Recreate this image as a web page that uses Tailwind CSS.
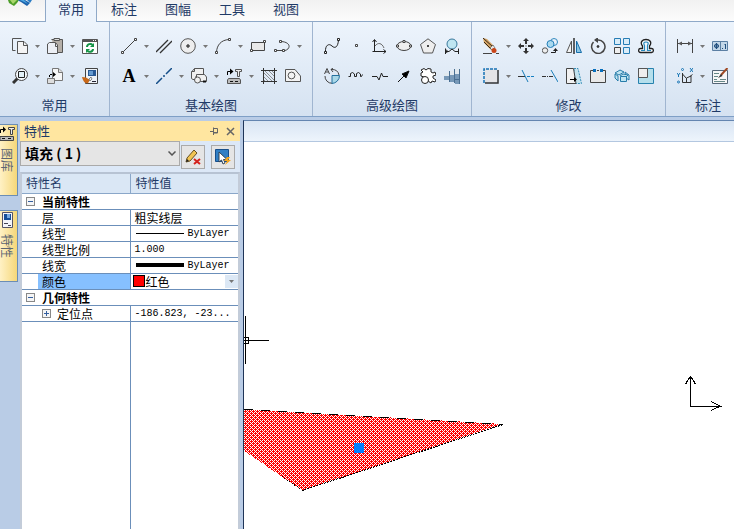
<!DOCTYPE html>
<html lang="zh-CN">
<head>
<meta charset="utf-8">
<title>特性</title>
<script src="https://cdn.jsdelivr.net/npm/@tailwindcss/browser@4"></script>
</head>
<body class="flex h-screen flex-col overflow-hidden bg-[#b9cce6] font-['Noto_Sans_CJK_SC',sans-serif] text-[13px] text-[#1f3a66]">
<svg class="hidden" aria-hidden="true">
  <symbol id="dd" viewBox="0 0 5 3"><path d="M0 0H5L2.5 3Z" fill="#777"/></symbol>
</svg>

<!-- Ribbon tabs -->
<header class="flex h-[22px] shrink-0 border-b border-[#8fa9c8] bg-gradient-to-b from-[#f1f1f1] to-[#fcfcfc]">
  <div class="w-[45px] shrink-0">
    <svg class="ml-2 h-[6px] w-6" viewBox="0 0 24 6" aria-hidden="true"><path d="M0 0H11L9 3 6 6 1 3Z" fill="#4d9e28"/><path d="M2 0H9L5 4Z" fill="#a9d66c"/><path d="M10 0H17L22 3 19 6 13 2 11 1Z" fill="#1c62ac"/><path d="M12 0H16L20 4Z" fill="#4aa6e0"/><path d="M19 0H24L22 3Z" fill="#2b7cc4"/></svg>
  </div>
  <nav class="flex [&_a]:flex [&_a]:justify-center [&_a]:leading-[18px]">
    <a href="#" class="relative h-[22px] w-[52px] border-x border-[#8fa9c8] bg-[#edf4fc]">常用</a>
    <a href="#" class="w-[54px]">标注</a><a href="#" class="w-[54px]">图幅</a><a href="#" class="w-[54px]">工具</a><a href="#" class="w-[54px]">视图</a>
  </nav>
</header>

<!-- Ribbon groups -->
<div role="toolbar" class="flex h-[95px] shrink-0 overflow-hidden border-b border-[#7f9fc6] bg-gradient-to-b from-[#edf4fc] to-[#d5e2f1] pt-[9px] [&_button]:grid [&_button]:h-[30px] [&_button]:shrink-0 [&_button]:place-items-center [&_h2]:text-center [&_h2]:leading-7 [&_section]:-mt-[9px] [&_section]:shrink-0 [&_section]:border-r [&_section]:border-[#a0b5d0] [&_section]:px-[7px] [&_section]:pt-[9px]">
  <section>
    <div class="flex pl-px">
      <button class="w-6" aria-label="复制"><svg class="size-4" viewBox="0 0 16 16" fill="none" stroke="#555"><path d="M3.500 12.500H.5V.5H9.500"/><path d="M5.500 3.500H12L15.500 7V15.500H5.500Z" fill="#f4f4f4"/><path d="M11.500 3.500V7.500H15.500"/></svg></button>
      <button class="w-[11px]" aria-label="复制选项"><svg class="h-[3px] w-[5px]"><use href="#dd"/></svg></button>
      <button class="w-6" aria-label="粘贴"><svg class="size-4" viewBox="0 0 16 16" stroke="#555"><path d="M4.500 1.500H15.500V14.500H10" fill="#b5afa8"/><path d="M7 .5H12.500V2.500H7Z" fill="#ddd"/><path d="M.5 6L2.500 4.500H8.500L10.500 7V15.500H.5Z" fill="#eceff5"/><path d="M8.500 5V8.500H10.500" fill="none"/></svg></button>
      <button class="w-[11px]" aria-label="粘贴选项"><svg class="h-[3px] w-[5px]"><use href="#dd"/></svg></button>
      <button class="w-6" aria-label="刷新"><svg class="size-4" viewBox="0 0 16 16"><path d="M.5 1.500H15.500V15.500H.5Z" fill="#fff" stroke="#555"/><path d="M1 2H15V4H1Z" fill="#555"/><path d="M11 2h1v1h-1zM13 2h1v1h-1z" fill="#fff"/><path d="M5 9C5 6 9 5 10.500 7M11 11C11 14 7 14.500 5.500 13" fill="none" stroke="#159447" stroke-width="2"/><path d="M12 5V9H8ZM4 15V11H8Z" fill="#159447"/></svg></button>
    </div>
    <div class="flex pl-px">
      <button class="w-6" aria-label="显示窗口"><svg class="size-4" viewBox="0 0 16 16" fill="none"><path d="M1 15L5.500 10.500" stroke="#333" stroke-width="3"/><circle cx="9.500" cy="6.500" r="6" fill="#f5f9fd" stroke="#444"/><path d="M6.500 3.500h6v6h-6z" stroke="#222" fill="#e1f0f7"/></svg></button>
      <button class="w-[11px]" aria-label="显示选项"><svg class="h-[3px] w-[5px]"><use href="#dd"/></svg></button>
      <button class="w-6" aria-label="带基点复制"><svg class="size-4" viewBox="0 0 16 16" fill="none" stroke="#777"><path d="M5.500 .5H11.500L15.500 4V12.500H5.500Z" fill="#f6f6f6"/><path d="M11.500 .5V4.500H15.500M.5 10.500H7.500V15.500H.5Z" fill="#ddd"/><path d="M2.500 9V6.500H7" stroke="#000" stroke-dasharray="2 1"/><path d="M6 4L9 6.500 6 9Z" fill="#000" stroke="none"/></svg></button>
      <button class="w-[11px]" aria-label="复制基点选项"><svg class="h-[3px] w-[5px]"><use href="#dd"/></svg></button>
      <button class="w-6" aria-label="特性匹配"><svg class="size-4" viewBox="0 0 16 16"><path d="M3.500 .5H15.500V15.500H3.500Z" fill="#eef2f7" stroke="#444"/><path d="M6 2H14V8H6Z" fill="#285995"/><path d="M7 3H11V7H7Z" fill="#669bd0"/><path d="M10 13.500H14" stroke="#223"/><path d="M0 9L4 9.500 8 12 6 15C3 16 1 13 0 9Z" fill="#c96818"/><path d="M7 11L9 9 10 11 8 13Z" fill="#eee" stroke="#444" stroke-width=".6"/></svg></button>
    </div>
    <h2>常用</h2>
  </section>

  <section>
    <div class="flex">
      <button class="w-6" aria-label="直线"><svg class="size-4" viewBox="0 0 16 16" fill="none" stroke="#444"><path d="M2 14L14 2"/><path d="M.5 13.500h2v2h-2zM13.500 .5h2v2h-2z" fill="#fff"/></svg></button>
      <button class="w-[11px]" aria-label="直线选项"><svg class="h-[3px] w-[5px]"><use href="#dd"/></svg></button>
      <button class="w-6" aria-label="平行线"><svg class="size-4" viewBox="0 0 16 16" stroke="#333" fill="none"><path d="M0 14L12 2M4 15L16 3" stroke-width="1.300"/></svg></button>
      <button class="w-6" aria-label="圆"><svg class="size-4" viewBox="0 0 16 16" fill="none" stroke="#555"><circle cx="8" cy="8" r="7.300" fill="#eee"/><path d="M7 7h2v2H7z" fill="#fff" stroke="#111"/></svg></button>
      <button class="w-[11px]" aria-label="圆选项"><svg class="h-[3px] w-[5px]"><use href="#dd"/></svg></button>
      <button class="w-6" aria-label="圆弧"><svg class="size-4" viewBox="0 0 16 16" fill="none" stroke="#444"><path d="M1.500 14C2 7 6 2 14 1.500"/><path d="M.5 13.500h2v2h-2zM13.500 .5h2v2h-2z" fill="#fff"/></svg></button>
      <button class="w-[11px]" aria-label="圆弧选项"><svg class="h-[3px] w-[5px]"><use href="#dd"/></svg></button>
      <button class="w-6" aria-label="矩形"><svg class="size-4" viewBox="0 0 16 16" fill="none" stroke="#444"><path d="M1.500 4.500H14.500V12.500H1.500Z" fill="#e8e8e8"/><path d="M.5 11.500h2v2h-2zM13.500 2.500h2v2h-2z" fill="#fff"/></svg></button>
      <button class="w-6" aria-label="多段线"><svg class="size-4" viewBox="0 0 16 16" fill="none" stroke="#444"><path d="M3 12.500H11C17 11 17 4 7 3.500"/><path d="M.5 11.500h2v2h-2zM8.500 11.500h2v2h-2zM5.500 2.500h2v2h-2z" fill="#fff"/></svg></button>
      <button class="w-[11px]" aria-label="多段线选项"><svg class="h-[3px] w-[5px]"><use href="#dd"/></svg></button>
    </div>
    <div class="flex">
      <button class="w-6 font-['Liberation_Serif',serif] text-[18px] font-bold leading-none text-black" aria-label="文字">A</button>
      <button class="w-[11px]" aria-label="文字选项"><svg class="h-[3px] w-[5px]"><use href="#dd"/></svg></button>
      <button class="w-6" aria-label="中心线"><svg class="size-4" viewBox="0 0 16 16" fill="none" stroke="#144e88"><path d="M0 16L6 10M10 6L16 0M7 8H9" stroke-width="1.500"/></svg></button>
      <button class="w-[11px]" aria-label="中心线选项"><svg class="h-[3px] w-[5px]"><use href="#dd"/></svg></button>
      <button class="w-6" aria-label="块"><svg class="size-4" viewBox="0 0 16 16" fill="#f0f0f0" stroke="#555"><path d="M.5 10.500V4L3.500 .5H12.500V8H5V11.500H2Z"/><path d="M3.500 .5V3.500H.5" fill="none"/><path d="M5.500 6.500H13.500L15.500 9V13.500H5.500Z"/><circle cx="6.500" cy="12" r="3"/><path d="M12 13.500h3" stroke="#111" stroke-width="2"/></svg></button>
      <button class="w-[11px]" aria-label="块选项"><svg class="h-[3px] w-[5px]"><use href="#dd"/></svg></button>
      <button class="w-6" aria-label="图库"><svg class="size-4" viewBox="0 0 16 16" fill="none" stroke="#555"><path d="M9.500 1.500H15.500V3.500H13.500V8.500H11.500V3.500H9.500Z" fill="#eee"/><path d="M1.500 7V3.500H5" stroke="#000"/><path d="M4 .5L7.500 3.500 4 6.500Z" fill="#000" stroke="none"/><path d="M2.500 10.500H13.500L14.500 12V15.500H1.500V12Z" fill="#bbb"/><path d="M4 13.500h3m2 0h3" stroke="#111"/></svg></button>
      <button class="w-[11px]" aria-label="图库选项"><svg class="h-[3px] w-[5px]"><use href="#dd"/></svg></button>
      <button class="w-6" aria-label="剖面线"><svg class="size-4" viewBox="0 0 16 16" fill="none" stroke="#333"><path d="M2.500 0V16M13.500 0V16M0 2.500H16M0 13.500H16"/><path d="M3 5L11 13M3 9L7 13M4 3L13 12M8 3L13 8M3 12l1 1M11 3l2 2" stroke="#777" stroke-width=".8"/></svg></button>
      <button class="w-6" aria-label="填充"><svg class="size-4" viewBox="0 0 16 16" fill="#f3f3f3" stroke="#555"><path d="M.5 1.500H10L15.500 8V13.500H.5Z"/><circle cx="6.500" cy="7.500" r="3.400"/></svg></button>
    </div>
    <h2>基本绘图</h2>
  </section>

  <section>
    <div class="flex">
      <button class="w-6" aria-label="样条"><svg class="size-4" viewBox="0 0 16 16" fill="none" stroke="#222"><path d="M1.500 14C1 7 5 5 8 8S14 9 14.500 2"/><path d="M.5 13.500h2v2h-2zM13.500 .5h2v2h-2z" fill="#fff"/></svg></button>
      <button class="w-6" aria-label="点"><svg class="size-4" viewBox="0 0 16 16" fill="#fff" stroke="#444"><path d="M7.500 6.500h2v2h-2z"/></svg></button>
      <button class="w-6" aria-label="公式曲线"><svg class="size-4" viewBox="0 0 16 16" fill="none" stroke="#222"><path d="M2.500 2V13.500H14M.5 4L2.500 1.500 4.500 4M11.500 11.500L14 13.500 11.500 15.500M.5 13.500H3"/><path d="M3 8C6 4 10 5 12 10" stroke="#666"/></svg></button>
      <button class="w-6" aria-label="椭圆"><svg class="size-4" viewBox="0 0 16 16" fill="none" stroke="#444"><ellipse cx="8" cy="8" rx="7" ry="4.500" fill="#eee"/><path d="M.5 7h2v2h-2zM13.500 7h2v2h-2zM7 2.500h2v2H7z" fill="#fff"/></svg></button>
      <button class="w-6" aria-label="正多边形"><svg class="size-4" viewBox="0 0 16 16" fill="#eee" stroke="#555"><path d="M8 .8L15.500 6.500 12.500 15H3.500L.5 6.500Z"/><path d="M7.500 7.500h1v1h-1z" stroke="#111"/></svg></button>
      <button class="w-6" aria-label="圆弧拟合"><svg class="size-4" viewBox="0 0 16 16" fill="none" stroke="#222"><circle cx="8" cy="6" r="5" fill="#bfe6f2" stroke="#39789c"/><path d="M1.500 16V10.500M14.500 16V10.500M2 13.500H5M11 13.500H14M5 13.500L8 11 11 13.500M1 11L4 13.500 1 15"/></svg></button>
    </div>
    <div class="flex">
      <button class="w-6" aria-label="局部放大"><svg class="size-4" viewBox="0 0 16 16" fill="none" stroke="#444"><path d="M7 1.500H8A7 7 0 0 1 15 7M1 8A7 7 0 0 0 8 15.300"/><path d="M8 7.500H15.500A8 8 0 0 1 8 15.500Z" fill="#a9d8e8" stroke="#24719e"/><path d="M.5 6L3 .5 5.500 6M1.500 4H4.500M9 0L7 1.500 9 4"/></svg></button>
      <button class="w-6" aria-label="波浪线"><svg class="size-4" viewBox="0 0 16 16" fill="none" stroke="#222"><path d="M.5 8.500H2.500V5.500L4.500 4.500 6.500 6V8.500H8.500V5.500L10.500 4.500 12.500 6V8.500H13.500L14.500 6.500"/></svg></button>
      <button class="w-6" aria-label="双折线"><svg class="size-4" viewBox="0 0 16 16" fill="none" stroke="#222"><path d="M0 8.500H5L7 12 9.500 5 11 8.500H16"/></svg></button>
      <button class="w-6" aria-label="箭头"><svg class="size-4" viewBox="0 0 16 16" stroke="#111"><path d="M2 14L8 8"/><path d="M6 6L13 3 10 10Z"/></svg></button>
      <button class="w-6" aria-label="齿轮"><svg class="size-4" viewBox="0 0 16 16" fill="#fff" stroke="#222"><path d="M4 9L1 8V5L3 4 1 2 4 .5 6 2 8 .5 11 1V4L13 5 15 4 16 7 13 8V10L16 12 15 14 12 13 11 15 8 13"/><circle cx="5" cy="12" r="3.500"/></svg></button>
      <button class="w-6" aria-label="孔轴"><svg class="size-4" viewBox="0 0 16 16"><path d="M0 5H6V3H11V1H16V16H11V14H6V12H0Z" fill="#7899b8"/><path d="M0 5H6V8H0ZM6 3H11V7H6ZM11 1H15V6H11Z" fill="#e1e9ef"/><path d="M15.500 1V16M11 11.500H16M5.500 3V14M10.500 1V15" stroke="#4a6f92" fill="none"/></svg></button>
    </div>
    <h2>高级绘图</h2>
  </section>

  <section>
    <div class="flex">
      <button class="w-6" aria-label="删除"><svg class="size-4" viewBox="0 0 16 16"><path d="M0 0L4 1 11 8 8 12 1 5Z" fill="#d7a564"/><path d="M0 0L10 9M1 4L8 11" stroke="#332719"/><path d="M7 10L10 7 12 10 9 12Z" fill="#e9e6e2" stroke="#444" stroke-width=".6"/><circle cx="11" cy="12.500" r="2.500" fill="#c94418"/><path d="M0 15.500H9M13 15.500H16" stroke="#444"/></svg></button>
      <button class="w-[11px]" aria-label="删除选项"><svg class="h-[3px] w-[5px]"><use href="#dd"/></svg></button>
      <button class="w-6" aria-label="平移"><svg class="size-4" viewBox="0 0 16 16" fill="#333"><path d="M8 0L11 3H9V6H7V3H5ZM8 16L5 13H7V10H9V13H11ZM0 8L3 5V7H6V9H3V11ZM16 8L13 11V9H10V7H13V5Z"/><path d="M7.500 7.500h1v1h-1z"/></svg></button>
      <button class="w-6" aria-label="平移复制"><svg class="size-4" viewBox="0 0 16 16" fill="none"><circle cx="12" cy="4" r="3.500" stroke="#338abf"/><circle cx="8.500" cy="6" r="3.500" fill="#a9d9ef" stroke="#237eb8"/><circle cx="3" cy="12.500" r="2.700" fill="#eee" stroke="#555"/><path d="M9 14.500H13.500V12" stroke="#222"/><path d="M11 13L13.500 10 16 13Z" fill="#222"/></svg></button>
      <button class="w-6" aria-label="镜像"><svg class="size-4" viewBox="0 0 16 16" fill="none"><path d="M5.500 3V14.500H.5Z" stroke="#555" fill="#f4f4f4"/><path d="M8 0V16" stroke="#111" stroke-width="1.300"/><path d="M10.500 3V14.500H15.500Z" stroke="#176eaa" fill="#8bc5e2"/></svg></button>
      <button class="w-6" aria-label="旋转"><svg class="size-4" viewBox="0 0 16 16" fill="none" stroke="#444"><path d="M8 2A6.700 6.700 0 1 1 3.500 4" stroke-width="1.500"/><path d="M8 -1L4 2 8 5Z" fill="#444" stroke="none"/><circle cx="8" cy="8.500" r="1" fill="#111"/></svg></button>
      <button class="w-6" aria-label="阵列"><svg class="size-4" viewBox="0 0 16 16" fill="#d9ecf8" stroke="#267db5"><path d="M.5 .5h6v6h-6zM9.500 .5h6v6h-6zM9.500 9.500h6v6h-6z"/><path d="M.5 9.500h6v6h-6z" fill="#eee" stroke="#444"/></svg></button>
      <button class="w-6" aria-label="等距线"><svg class="size-4" viewBox="0 0 16 16" fill="#f4f9fd"><path d="M2.500 14.500C0 14.500 0 10.500 2.500 10.500H4.500V8C1.500 4 4.500 1.500 8 1.500S14.500 4 11.500 8V10.500H13.500C16 10.500 16 14.500 13.500 14.500Z" stroke="#222" stroke-width="1.300"/><path d="M3 12.500H6.500V7.500C5 5 6 4 8 4S11 5 9.500 7.500V12.500H13" stroke="#2788bd" stroke-width="1.200"/></svg></button>
    </div>
    <div class="flex">
      <button class="w-6" aria-label="拉伸"><svg class="size-4" viewBox="0 0 16 16"><path d="M1 1H14V14H1Z" fill="#e4e4e7"/><path d="M1 15V1H15" fill="none" stroke="#1672b5" stroke-width="1.500" stroke-dasharray="3 1"/><path d="M15 2V15H2" fill="none" stroke="#333" stroke-width="1.500"/></svg></button>
      <button class="w-[11px]" aria-label="拉伸选项"><svg class="h-[3px] w-[5px]"><use href="#dd"/></svg></button>
      <button class="w-6" aria-label="裁剪"><svg class="size-4" viewBox="0 0 16 16" fill="none" stroke="#333"><path d="M0 8.500H7"/><path d="M9 8.500H16" stroke="#1680c3" stroke-dasharray="3 1"/><path d="M4 2L10 14" stroke="#167bb8"/></svg></button>
      <button class="w-6" aria-label="延伸"><svg class="size-4" viewBox="0 0 16 16" fill="none" stroke="#333"><path d="M0 8.500H6M7 8.500h4" stroke-dasharray="4 1"/><path d="M9 2L16 14" stroke="#167bb8"/></svg></button>
      <button class="w-6" aria-label="拉伸图形"><svg class="size-4" viewBox="0 0 16 16"><path d="M8 .5H12L15.500 15.500H8Z" fill="#c3e3ef" stroke="#378eb8" stroke-dasharray="2 1"/><path d="M.5 .5H7.500L10 15.500H.5Z" fill="#f1f1f1" stroke="#444"/><path d="M4 11.500H10" stroke="#000"/><path d="M8 9L11 11.500 8 14Z"/></svg></button>
      <button class="w-6" aria-label="打断"><svg class="size-4" viewBox="0 0 16 16"><path d="M3 2.500H.5V14.500H15.500V2.500H13M7 2.500H9" fill="#e9e9e9" stroke="#444"/><path d="M3 1h3v3H3zM10 1h3v3h-3z" fill="#086fbd"/></svg></button>
      <button class="w-6" aria-label="分解"><svg class="size-4" viewBox="0 0 16 16" fill="#bfe4f1" stroke="#277daa"><path d="M1 5L6 2 10 4 5 7ZM1 6L4 8V13L1 10ZM11 4L15 7V12L12 10Z"/><path d="M6.500 8.500h6v5h-6zM6 8L9 6 14 7 12 9"/></svg></button>
      <button class="w-6" aria-label="缩放"><svg class="size-4" viewBox="0 0 16 16"><path d="M.5 .5H15.500V15.500H.5Z" fill="#b5dfec" stroke="#2782ae"/><path d="M.5 .5H9.500V9.500H.5Z" fill="#eee" stroke="#555"/></svg></button>
    </div>
    <h2>修改</h2>
  </section>

  <section>
    <div class="flex">
      <button class="w-6" aria-label="尺寸标注"><svg class="size-4" viewBox="0 0 16 16" stroke="#444"><path d="M.5 1V15M15.500 1V15M1 5.500H15"/><path d="M1 5.500L5 3.500V7.500ZM15 5.500L11 3.500V7.500Z" fill="#555" stroke="none"/></svg></button>
      <button class="w-[11px]" aria-label="尺寸选项"><svg class="h-[3px] w-[5px]"><use href="#dd"/></svg></button>
      <button class="w-6" aria-label="形位公差"><svg class="size-4" viewBox="0 0 16 16" fill="none" stroke="#214f7e"><path d="M.5 3.500H15.500V12.500H.5ZM8.500 4V12" fill="#c3d7e8" stroke="#5b7fa3"/><circle cx="4.500" cy="8" r="2"/><path d="M2 8H7M4.500 5V11M10 10.500h1M12.500 7L13.500 6V11"/></svg></button>
      <button class="w-[11px]" aria-label="公差选项"><svg class="h-[3px] w-[5px]"><use href="#dd"/></svg></button>
    </div>
    <div class="flex">
      <button class="w-6" aria-label="坐标标注"><svg class="size-4" viewBox="0 0 16 16" fill="none" stroke="#333"><path d="M5.500 5V14.500H14M5.500 6L9.500 10.500M9.500 14V10L14 8V14.500M13 8.500L15.500 6.500"/><g stroke="#1876b5"><circle cx="5.500" cy="1.500" r="1"/><circle cx="1.500" cy="14" r="1"/><path d="M13 0L16 4M16 0L13 4M0 5L1.500 7V9M3 5L1.500 7"/></g></svg></button>
      <button class="w-[11px]" aria-label="坐标选项"><svg class="h-[3px] w-[5px]"><use href="#dd"/></svg></button>
      <button class="w-6" aria-label="标注编辑"><svg class="size-4" viewBox="0 0 16 16"><path d="M.5 2.500H15.500V15.500H.5Z" fill="#f7f7f7" stroke="#567"/><path d="M2 5.500H7M2 8.500H6M2 11.500H5M8 11.500H14M2 13.500H13" stroke="#688"/><path d="M15.500 0L9 7" stroke="#a04a25" stroke-width="2"/><path d="M9 6L10.500 8 6 10Z" fill="#333"/></svg></button>
      <button class="w-[11px]" aria-label="编辑选项"><svg class="h-[3px] w-[5px]"><use href="#dd"/></svg></button>
    </div>
    <h2>标注</h2>
  </section>
</div>

<div class="flex min-h-0 grow pt-[3px]">
  <!-- Docked tabs -->
  <aside class="flex w-5 shrink-0 flex-col gap-[14px] pt-1 text-xs text-[#5d6673] [&_button]:flex [&_button]:h-[72px] [&_button]:w-[18px] [&_button]:flex-col [&_button]:items-center [&_button]:border [&_button]:border-l-0 [&_button]:border-[#6b8db5] [&_button]:bg-gradient-to-r [&_button]:from-[#fff1c4] [&_button]:to-[#f5d778] [&_button]:pr-1">
    <button><svg class="size-4 shrink-0" viewBox="0 0 16 16" fill="none" stroke="#444"><path d="M9.500 2.500H15.500V4.500H13.500V9.500H11.500V4.500H9.500Z" fill="#eee"/><path d="M1.500 8V4.500H4" stroke="#000"/><path d="M4 1.500L7 4.500 4 7.500Z" fill="#000" stroke="none"/><path d="M1 11.500H14.500V15.500H1Z" fill="#bbb"/><path d="M3 13.500h3m3 0h3" stroke="#111"/></svg><span class="mt-[7px] leading-4 [text-orientation:sideways] [writing-mode:vertical-rl]">图库</span></button>
    <button><svg class="mt-px size-4 shrink-0" viewBox="0 0 16 16"><path d="M3.500 .5H13.500V15.500H3.500Z" fill="#f3f5fa" stroke="#556"/><path d="M5 2H12V8H5Z" fill="#164f99"/><path d="M8 2H11V6H8Z" fill="#76a9e0"/><path d="M5 11.500H9M9 13.500H12" stroke="#445"/></svg><span class="mt-[6px] leading-4 [text-orientation:sideways] [writing-mode:vertical-rl]">特性</span></button>
  </aside>

  <!-- Property palette -->
  <section class="flex w-[220px] shrink-0 flex-col pt-px">
    <div class="flex h-5 items-center bg-[#ffe6a0] pl-1 pr-[5px]">
      <h2 class="grow leading-5">特性</h2>
      <button class="mr-[7px]" aria-label="固定"><svg class="h-2 w-[9px]" viewBox="0 0 9 8" fill="none" stroke="#666"><path d="M0 4.500H3M3.500 .5V8M4 1.500H7.500V6H4M4 5.500H8"/></svg></button>
      <button aria-label="关闭"><svg class="size-[9px]" viewBox="0 0 9 9" stroke="#666" stroke-width="1.500"><path d="M1 1L8 8M8 1L1 8"/></svg></button>
    </div>
    <div class="flex h-[31px] items-start bg-[#dce8f7]">
      <label class="relative w-40">
        <span class="sr-only">选择对象</span>
        <select class="block h-[25px] w-full appearance-none border border-[#aaa] bg-[#e5e5e5] pl-1 text-sm font-bold leading-[23px] text-black"><option>填充 ( 1 )</option></select>
        <svg class="pointer-events-none absolute right-1 top-[10px] h-[5px] w-2" viewBox="0 0 8 5" fill="none" stroke="#555" stroke-width="1.500"><path d="M.5 .5L4 4 7.500 .5"/></svg>
      </label>
      <button class="ml-px mt-1 grid size-6 place-items-center border border-[#aaa] bg-[#e5e5e5]" aria-label="取消选择"><svg class="size-4" viewBox="0 0 16 16"><path d="M1 13L2 9 9 1 12 4 5 12Z" fill="#f1c453" stroke="#665022"/><path d="M1 13L2 10 4 12Z" fill="#222"/><path d="M9 10L15 15M15 10L9 15" stroke="#d4221c" stroke-width="2"/></svg></button>
      <button class="ml-[6px] mt-1 grid size-6 place-items-center border border-[#aaa] bg-[#e5e5e5]" aria-label="快速选择"><svg class="size-4" viewBox="0 0 16 16"><path d="M.5 .5H13.500V12.500H.5Z" fill="#317fc4" stroke="#174f8c"/><path d="M4 3V13L6.500 11 8 15 10 14 8.500 10.500H12Z" fill="#fff" stroke="#345"/><path d="M12 8L9 12H12L10 16 16 11H13L15 8Z" fill="#f4a51d"/></svg></button>
    </div>
    <div class="grow border-x-2 border-t-2 border-x-[#c3ccd9] border-t-[#b7c3d3] bg-white bg-[linear-gradient(#6b8fba,#6b8fba)] bg-[length:1px_100%] bg-[position:108px_0] bg-no-repeat">
      <table class="w-full table-fixed border-collapse bg-white text-left text-xs text-black [&_td]:h-4 [&_td]:border-b [&_td]:border-[#6b8fba] [&_td]:p-0 [&_td]:leading-[15px] [&_th]:p-0">
        <colgroup><col class="w-4"><col class="w-[92px]"><col></colgroup>
        <thead><tr class="h-[19px] border-b border-[#8aa7c9] bg-[#dae7f5] text-[#1f3a66]">
          <th colspan="2" class="border-r border-[#8aa7c9] font-normal leading-[18px]"><span class="pl-1">特性名</span></th><th class="font-normal leading-[18px]"><span class="pl-[5px]">特性值</span></th>
        </tr></thead>
        <tbody>
          <tr><td colspan="3"><div class="flex items-center"><button class="mx-1 mr-[7px] grid size-[9px] place-items-center border border-[#888] bg-[#f5f5f5]" aria-label="折叠当前特性"><span class="h-px w-[5px] bg-[#345f9f]"></span></button><b>当前特性</b></div></td></tr>
          <tr><td></td><td class="border-r"><span class="pl-1">层</span></td><td><span class="pl-1">粗实线层</span></td></tr>
          <tr><td></td><td class="border-r"><span class="pl-1">线型</span></td><td><div class="flex items-center gap-1 pl-[5px] font-['Liberation_Mono',monospace] text-[10px]"><span class="h-px w-12 bg-black"></span>ByLayer</div></td></tr>
          <tr><td></td><td class="border-r"><span class="pl-1">线型比例</span></td><td><div class="pl-1 font-['Liberation_Mono',monospace] text-[10px]">1.000</div></td></tr>
          <tr><td></td><td class="border-r"><span class="pl-1">线宽</span></td><td><div class="flex items-center gap-1 pl-[5px] font-['Liberation_Mono',monospace] text-[10px]"><span class="h-1 w-12 bg-black"></span>ByLayer</div></td></tr>
          <tr><td></td><td class="border-r bg-[#86c0ff]"><span class="pl-1">颜色</span></td><td><div class="flex items-center pl-[2px]"><span class="mr-px size-3 border border-black bg-[#f00]"></span><span class="grow">红色</span><button class="grid h-[13px] w-[13px] place-items-center bg-[#dce8f5]" aria-label="选择颜色"><svg class="h-[3px] w-[5px]"><use href="#dd"/></svg></button></div></td></tr>
          <tr><td colspan="3"><div class="flex items-center"><button class="mx-1 mr-[7px] grid size-[9px] place-items-center border border-[#888] bg-[#f5f5f5]" aria-label="折叠几何特性"><span class="h-px w-[5px] bg-[#345f9f]"></span></button><b>几何特性</b></div></td></tr>
          <tr><td></td><td class="border-r"><div class="flex items-center gap-[6px] pl-1"><button class="grid size-[9px] place-items-center border border-[#888] bg-[#f5f5f5]" aria-label="展开定位点"><svg class="size-[5px]" viewBox="0 0 5 5" stroke="#345f9f"><path d="M0 2.500H5M2.500 0V5"/></svg></button>定位点</div></td><td><div class="truncate pl-1 font-['Liberation_Mono',monospace] text-[10px]">-186.823, -23...</div></td></tr>
        </tbody>
      </table>
    </div>
  </section>

  <!-- Drawing window -->
  <main class="ml-[3px] flex min-w-0 grow flex-col border-l border-t border-l-[#1f3558] border-t-[#6485b0] bg-white">
    <div class="h-[21px] shrink-0 border-b border-[#b3c7e0] bg-gradient-to-b from-[#d9e5f3] to-[#edf4fc]"></div>
    <svg class="min-h-0 w-full grow" viewBox="244 142 490 387" preserveAspectRatio="xMinYMin slice" fill="none" stroke="#000" shape-rendering="crispEdges" role="img" aria-label="绘图区">
      <defs><pattern id="fill" width="4" height="4" patternUnits="userSpaceOnUse"><path d="M0 0h4v4H0z" fill="#f00" stroke="none"/><path d="M0 0h1v1H0zM2 0h1v1H2zM1 1h1v1H1zM0 2h1v1H0zM2 2h1v1H2zM3 3h1v1H3z" fill="#fff" stroke="none"/></pattern></defs>
      <path d="M244 409L503 424 302.500 490.500 244 451Z" fill="url(#fill)" stroke="none"/>
      <path d="M244 409.500L503 424.500" stroke-dasharray="9 8"/>
      <path d="M503 424.500L302.500 490.500" stroke-dasharray="2 1"/>
      <path d="M302.500 490.500L280 475" stroke-dasharray="1 2"/>
      <path d="M354 443h10v10h-10z" fill="#007fff" stroke="none"/>
      <path d="M245.500 316V364M244 340.500H269M244 337.500H248.500V343.500H244"/>
      <path d="M690.500 377V406.500H720"/>
      <path d="M685.500 384.500L687.500 380.500 690.500 376.500 693.500 380.500 695.500 384.500M711 401.500L715 403.500 720.500 406.500 715 408.500 711 410.500"/>
    </svg>
  </main>
</div>
</body>
</html>
